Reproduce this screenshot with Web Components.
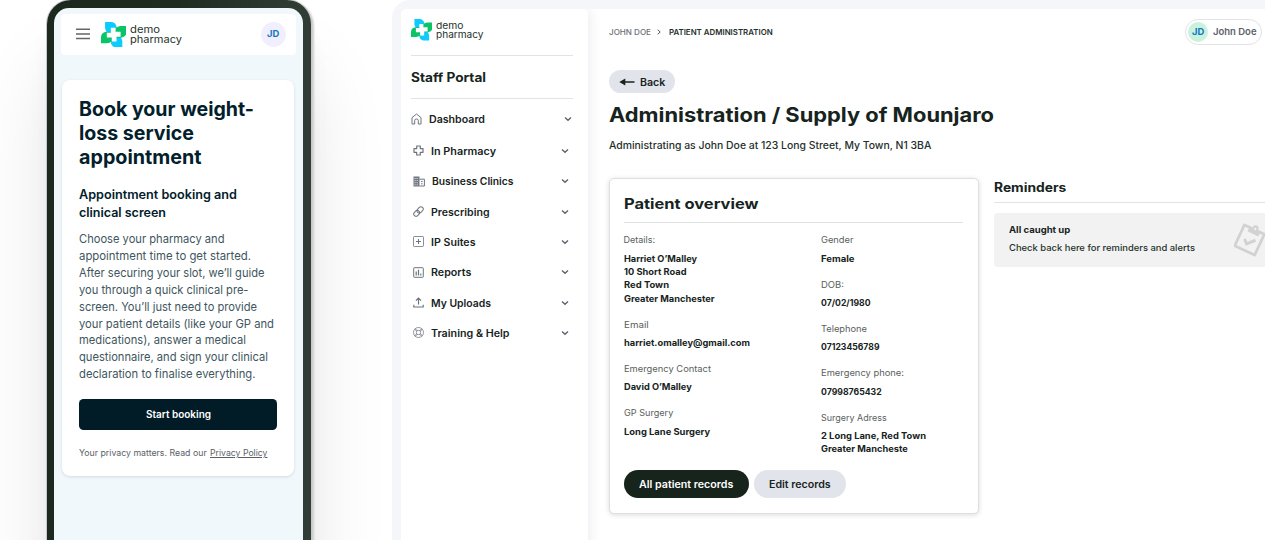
<!DOCTYPE html>
<html lang="en">
<head>
<meta charset="utf-8">
<title>Demo Pharmacy</title>
<style>
html,body{margin:0;height:540px;width:1265px;overflow:hidden;background:#fff;font-family:Inter,"Noto Sans",sans-serif;color:#16241c}
</style>
</head>
<body>
<pharmacy-showcase></pharmacy-showcase>
<script>
function define(name, html) {
  const t = document.createElement('template');
  t.innerHTML = html;
  customElements.define(name, class extends HTMLElement {
    connectedCallback() {
      if (this.shadowRoot) return;
      this.attachShadow({mode: 'open'}).append(t.content.cloneNode(true));
    }
  });
}

define('pharmacy-showcase', `<style>
:host{display:flex;width:1265px;height:540px;overflow:hidden;background:#fff}
</style><phone-stage></phone-stage><tablet-frame></tablet-frame>`);

/* ---------- phone ---------- */
define('phone-stage', `<style>
:host{display:block;box-sizing:border-box;width:392px;height:540px;padding-left:46.5px;flex:none;overflow:hidden;background:#fff}
.body{box-sizing:border-box;width:264px;height:640px;border-radius:24px;padding:8px 8px 0 7.5px;background:linear-gradient(90deg,#1b291f 0%,#1e2c22 50%,#303e35 100%);box-shadow:0 0 0 1px #c9c9c9,2px 2px 2px 1px #cfcdd0,0 70px 80px 0 rgba(0,0,0,.1),0 30px 24px rgba(0,0,0,.035)}
.screen{box-sizing:border-box;height:632px;border-radius:15px 15px 0 0;background:#f0f8fb;padding:5.5px 7px 0 6.5px}
</style><div class="body"><div class="screen"><phone-bar></phone-bar><booking-card></booking-card></div></div>`);

define('phone-bar', `<style>
:host{display:flex;box-sizing:border-box;height:41.5px;align-items:center;background:#fff;border-radius:4px;padding:0 9.5px 0 15.5px}
.menu{display:block;width:14px;height:12px;margin-right:10.5px;flex:none}
brand-logo{--s:25.4px}
.words{margin-left:4.5px;flex:1;padding-top:.4px;color:#25332c}
</style><svg class="menu" viewBox="0 0 14 12"><path d="M0 1.2H14M0 5.9H14M0 10.6H14" stroke="#666" stroke-width="1.5"/></svg><brand-logo></brand-logo>
<div class="words"><fit-line w="30" fs="10.2" lh="10.8">demo</fit-line><fit-line w="52" fs="10.2" lh="10.8">pharmacy</fit-line></div>
<user-badge style="--d:25px;--bg:#f1effe"><fit-line w="12.3" fs="9.2" fw="700" lh="12">JD</fit-line></user-badge>`);

define('brand-logo', `<style>:host{display:block;width:var(--s);height:var(--s);flex:none}svg{display:block;width:100%;height:100%}</style>
<svg viewBox="0 0 25 25"><defs><path id="l" d="M4 0H10.5Q14.9.5 15.4 5.5V12.5H9.5Q4.8 11.3 4 6Z"/></defs>
<use href="#l" fill="#0ccbff"/><use href="#l" fill="#0ccbff" transform="rotate(180 12.5 12.5)"/>
<use href="#l" fill="#0bc46a" transform="rotate(90 12.5 12.5)"/><use href="#l" fill="#0bc46a" transform="rotate(270 12.5 12.5)"/>
<path fill="#fff" d="M9.7 5.7H14.4V9.7H19.3V14.4H15.3V19.3H10.6V15.3H5.7V10.6H9.7Z"/></svg>`);

define('user-badge', `<style>:host{display:flex;align-items:center;justify-content:center;width:var(--d);height:var(--d);border-radius:50%;background:var(--bg);color:#1377c2;flex:none}</style><slot></slot>`);

define('booking-card', `<style>
:host{display:block;box-sizing:border-box;margin:25px 1.5px 0 1.5px;width:231.5px;height:396.3px;padding:17px 16px 0 17px;background:#fff;border-radius:8px;box-shadow:0 1px 3px rgba(20,50,60,.14)}
.h1,.h2{color:#02202b}.h2{margin-top:17px}
.p{margin-top:10.4px;color:#415660}
.btn{display:flex;align-items:center;justify-content:center;width:198px;height:31.7px;margin-top:15.6px;background:#011c26;border-radius:4.5px;color:#fff}
.note{display:flex;gap:3px;margin-top:16.9px;color:#5b6167}
u{text-underline-offset:1px;text-decoration-thickness:1px}
</style>
<div class="h1"><fit-line w="175" fs="19.5" fw="700" lh="24">Book your weight-</fit-line><fit-line w="115" fs="19.5" fw="700" lh="24">loss service</fit-line><fit-line w="122.5" fs="19.5" fw="700" lh="24">appointment</fit-line></div>
<div class="h2"><fit-line w="158" fs="12.5" fw="600" lh="17.5">Appointment booking and</fit-line><fit-line w="87" fs="12.5" fw="600" lh="17.5">clinical screen</fit-line></div>
<div class="p">
<fit-line w="145.5" fs="11.6" lh="16.85">Choose your pharmacy and</fit-line>
<fit-line w="172" fs="11.6" lh="16.85">appointment time to get started.</fit-line>
<fit-line w="185.5" fs="11.6" lh="16.85">After securing your slot, we’ll guide</fit-line>
<fit-line w="169.5" fs="11.6" lh="16.85">you through a quick clinical pre-</fit-line>
<fit-line w="178" fs="11.6" lh="16.85">screen. You’ll just need to provide</fit-line>
<fit-line w="195" fs="11.6" lh="16.85">your patient details (like your GP and</fit-line>
<fit-line w="167" fs="11.6" lh="16.85">medications), answer a medical</fit-line>
<fit-line w="189" fs="11.6" lh="16.85">questionnaire, and sign your clinical</fit-line>
<fit-line w="176.5" fs="11.6" lh="16.85">declaration to finalise everything.</fit-line></div>
<div class="btn"><fit-line w="65" fs="10" fw="600" lh="14">Start booking</fit-line></div>
<div class="note"><fit-line w="127.7" fs="8.6" lh="13">Your privacy matters. Read our</fit-line><fit-line w="57.5" fs="8.6" lh="13"><u>Privacy Policy</u></fit-line></div>`);

/* ---------- tablet ---------- */
define('tablet-frame', `<style>
:host{display:block;flex:1;min-width:0;box-sizing:border-box;height:560px;padding:9px 0 0 8.5px;background:#f5f6f9;border-radius:18px 0 0 0}
.inner{display:flex;height:551px;background:#fff;border-radius:5px 0 0 0;overflow:hidden}
</style><div class="inner"><staff-sidebar></staff-sidebar><patient-page></patient-page></div>`);

define('staff-sidebar', `<style>
:host{display:block;box-sizing:border-box;width:187.5px;padding:10px 15px 0 10px;flex:none;background:#fff;border-radius:5px;box-shadow:0 0 14px rgba(60,66,90,.13);color:#17241d}
.brand{display:flex;gap:3.7px;height:35.5px;align-items:flex-start;border-bottom:1px solid #e0e4e6}
brand-logo{--s:21.5px}.words{padding-top:1.6px;color:#25332c}
.title{display:flex;align-items:center;box-sizing:border-box;height:43px;padding-top:1px;border-bottom:1px solid #e0e4e6}
nav{display:block;padding-top:5px}
</style>
<div class="brand"><brand-logo></brand-logo><div class="words"><fit-line w="27.5" fs="9.3" lh="9.7">demo</fit-line><fit-line w="47.5" fs="9.3" lh="9.7">pharmacy</fit-line></div></div>
<div class="title"><fit-line w="75" fs="12.7" fw="700" lh="17">Staff Portal</fit-line></div>
<nav>
<nav-row style="--l:0px;--g:7px;--r:1.2px;--h:31.6px"><svg slot="icon" width="11" height="12" viewBox="0 0 11 12"><path d="M1 4.6 5.5 1 10 4.6V11H7.3V7.4Q7.3 6 5.5 6T3.7 7.4V11H1Z"/></svg><fit-line w="56" fs="10" fw="600" lh="14">Dashboard</fit-line></nav-row>
<nav-row style="--h:31px"><svg slot="icon" width="11" height="11" viewBox="0 0 11 11"><path d="M3.7 1H7.3V3.7H10V7.3H7.3V10H3.7V7.3H1V3.7H3.7Z" stroke-linejoin="round" stroke-width="1.2"/></svg><fit-line w="65" fs="10" fw="600" lh="14">In Pharmacy</fit-line></nav-row>
<nav-row style="--g:7px"><svg slot="icon" width="12" height="11" viewBox="0 0 12 11"><path d="M.5.5H6.5V10.5H.5Z" fill="#737983" stroke="none"/><path d="M6.5 3.2H11.4V10H6.5" stroke-width="1"/><path d="M1.5 2.5H5.5M1.5 4.6H5.5M1.5 6.7H5.5M1.5 8.8H5.5" stroke="#fff" stroke-width=".7" stroke-dasharray="1.2 .9"/><path d="M8 5.5H9.6M8 7.8H9.6" stroke-width="1"/></svg><fit-line w="81.5" fs="10" fw="600" lh="14">Business Clinics</fit-line></nav-row>
<nav-row><svg slot="icon" width="11" height="11" viewBox="0 0 11 11"><g transform="rotate(-45 5.5 5.5)"><rect x="-.2" y="3.2" width="6.2" height="4.6" rx="2.3"/><rect x="4.4" y="3.2" width="6.8" height="4.6" rx="2.3"/></g></svg><fit-line w="58.5" fs="10" fw="600" lh="14">Prescribing</fit-line></nav-row>
<nav-row><svg slot="icon" width="11" height="11" viewBox="0 0 11 11"><rect x=".5" y=".5" width="10" height="10" rx=".7" stroke-width=".8"/><path d="M5.5 3V8M3 5.5H8"/></svg><fit-line w="44.5" fs="10" fw="600" lh="14">IP Suites</fit-line></nav-row>
<nav-row><svg slot="icon" width="11" height="11" viewBox="0 0 11 11"><rect x=".7" y=".7" width="9.6" height="9.6" rx=".6"/><path d="M3.2 4.5V8.5M5.5 2.7V8.5M7.8 6.5V8.5" stroke-width="1.2"/></svg><fit-line w="40.3" fs="10" fw="600" lh="14">Reports</fit-line></nav-row>
<nav-row><svg slot="icon" width="11" height="11" viewBox="0 0 11 11"><path d="M5.5 7.6V1.2M2.9 3.7 5.5 1.1 8.1 3.7M.8 7.8V10H10.2V7.8" stroke-width="1.15"/></svg><fit-line w="60" fs="10" fw="600" lh="14">My Uploads</fit-line></nav-row>
<nav-row><svg slot="icon" width="11" height="11" viewBox="0 0 11 11"><g stroke-width=".75"><circle cx="5.5" cy="5.5" r="5"/><circle cx="5.5" cy="5.5" r="2.2"/><path d="M1.7 2.4 3.7 4.1M2.4 1.7 4.1 3.7M9.3 2.4 7.3 4.1M8.6 1.7 6.9 3.7M1.7 8.6 3.7 6.9M2.4 9.3 4.1 7.3M9.3 8.6 7.3 6.9M8.6 9.3 6.9 7.3"/></g></svg><fit-line w="78.5" fs="10" fw="600" lh="14">Training &amp; Help</fit-line></nav-row>
</nav>`);

define('nav-row', `<style>
:host{display:flex;align-items:center;box-sizing:border-box;height:var(--h,30.35px);padding:0 var(--r,4px) 0 var(--l,2.5px)}
::slotted(svg){fill:none;stroke:#6d737d;stroke-width:1;margin-right:var(--g,7px);flex:none}
.c{margin-left:auto;flex:none}
</style><slot name="icon"></slot><slot></slot><svg class="c" width="8" height="6" viewBox="0 0 8 6"><path d="M1 1.4 4 4.3 7 1.4" fill="none" stroke="#5c636d" stroke-width="1.35"/></svg>`);

define('patient-page', `<style>
:host{display:block;flex:1;min-width:0;box-sizing:border-box;padding:10px 0 0 20.5px;color:#17241d}
header{display:flex;align-items:center;height:26px;padding-right:3px}
.crumb{color:#6b7178}.here{color:#25302b}
header svg{margin:0 7.5px 0 6.5px}
.user{display:flex;align-items:center;box-sizing:border-box;margin-left:auto;width:77px;height:26px;border:1px solid #e2e3e6;border-radius:13px;padding-left:2px;gap:4.8px;color:#5b6067}
.back{display:flex;align-items:center;box-sizing:border-box;width:66.5px;height:23px;margin-top:25px;border-radius:12px;background:#e2e4ec;padding-left:10px;gap:5px;color:#19231e}
.h1{margin-top:9px}.sub{margin-top:10px;color:#25302b}
.cols{display:flex;gap:15px;margin-top:24.5px}
reminder-list{flex:1;min-width:0}
</style>
<header><fit-line class="crumb" w="42" fs="7.9" fw="500" lh="12">JOHN DOE</fit-line><svg width="4" height="6" viewBox="0 0 4 6"><path d="M.7.7 3.2 3 .7 5.3" fill="none" stroke="#555" stroke-width="1"/></svg><fit-line class="here" w="103.7" fs="7.9" fw="600" lh="12">PATIENT ADMINISTRATION</fit-line>
<div class="user"><user-badge style="--d:20px;--bg:#c8f2de"><fit-line w="12.3" fs="9" fw="700" lh="12">JD</fit-line></user-badge><fit-line w="43.5" fs="9.3" fw="600" lh="12">John Doe</fit-line></div></header>
<div class="back"><svg width="16" height="8" viewBox="0 0 16 8"><path d="M4 4H15.5" stroke="#19231e" stroke-width="1.4"/><path d="M.3 4 6.3.6V7.4Z" fill="#19231e"/></svg><fit-line w="25.3" fs="10" fw="600" lh="14">Back</fit-line></div>
<fit-line class="h1" w="385" fs="19.6" fw="700" lh="26">Administration / Supply of Mounjaro</fit-line>
<fit-line class="sub" w="322.3" fs="9.8" fw="500" lh="15">Administrating as John Doe at 123 Long Street, My Town, N1 3BA</fit-line>
<div class="cols"><patient-overview></patient-overview><reminder-list></reminder-list></div>`);

define('patient-overview', `<style>
:host{display:block;box-sizing:border-box;width:370px;height:336px;padding:15px 14.5px 0 14px;flex:none;background:#fff;border:1px solid #dddfe2;border-radius:5px;box-shadow:0 1px 5px rgba(30,34,50,.16)}
.t{padding-bottom:9.5px;border-bottom:1px solid #dfe1e3}
.grid{display:grid;grid-template-columns:197.5px 1fr;margin-top:10.3px}
.acts{display:flex;gap:5px;margin-top:1.8px}
.acts div{display:flex;align-items:center;justify-content:center;height:28px;border-radius:14px;background:#e2e4ec;width:92.7px}
.acts .dark{background:#17241b;color:#fff;width:125px}
</style>
<div class="t"><fit-line w="134.5" fs="14.4" fw="700" lh="19">Patient overview</fit-line></div>
<div class="grid"><div>
<data-field label="Details:" lw="31.5" lines="Harriet O’Malley|73;10 Short Road|62.5;Red Town|45;Greater Manchester|90.5"></data-field>
<data-field label="Email" lw="24.7" lines="harriet.omalley@gmail.com|126"></data-field>
<data-field label="Emergency Contact" lw="87" lines="David O’Malley|67.7"></data-field>
<data-field label="GP Surgery" lw="49.3" lines="Long Lane Surgery|86.2"></data-field>
</div><div>
<data-field label="Gender" lw="32.5" lines="Female|33.5"></data-field>
<data-field label="DOB:" lw="23" lines="07/02/1980|49.5"></data-field>
<data-field label="Telephone" lw="46" lines="07123456789|58.5"></data-field>
<data-field label="Emergency phone:" lw="83" lines="07998765432|60.7"></data-field>
<data-field label="Surgery Adress" lw="65.7" lines="2 Long Lane, Red Town|105;Greater Mancheste|86.7"></data-field>
</div></div>
<div class="acts"><div class="dark"><fit-line w="94.3" fs="10" fw="600" lh="14">All patient records</fit-line></div><div><fit-line w="61.7" fs="10" fw="600" lh="14">Edit records</fit-line></div></div>`);

define('reminder-list', `<style>
:host{display:block}
.t{padding:1px 0 6.5px;border-bottom:1px solid #e1e3e5}
.box{display:flex;box-sizing:border-box;height:54.5px;margin-top:9.5px;background:#f2f2f2;border-radius:3px 0 0 3px;padding:10.6px 0 0 15px;color:#25302b}
.box svg{margin-left:auto;flex:none}
.b{color:#17241d;margin-bottom:5.2px}
</style>
<div class="t"><fit-line w="72.3" fs="12.5" fw="700" lh="17">Reminders</fit-line></div>
<div class="box"><div><fit-line class="b" w="61.3" fs="9" fw="700" lh="13">All caught up</fit-line><fit-line w="186" fs="9" fw="500" lh="13">Check back here for reminders and alerts</fit-line></div>
<svg width="31" height="34" viewBox="0 0 31 34" fill="none" stroke="#d2d2d2"><g transform="rotate(25 15.5 17)"><path d="M12 5.5H4.5V28.5H26.5V5.5H20" stroke-width="2.8" stroke-linejoin="round"/><path d="M10 10V4.5H12.6Q13.2.8 16 .8T19.4 4.5H22V10Z" fill="#d2d2d2" stroke="none"/><circle cx="16" cy="4.6" r="1.2" fill="#f2f2f2" stroke="none"/><path d="M10.5 18.2 14.5 21.7 21 14.7" stroke-width="3"/></g></svg></div>`);

/* A label above one or more bold values; "lines" holds text|width pairs. */
customElements.define('data-field', class extends HTMLElement {
  connectedCallback() {
    if (this.shadowRoot) return;
    const rows = this.getAttribute('lines').split(';').map(s => s.split('|'));
    this.attachShadow({mode: 'open'}).innerHTML = `<style>
:host{display:block;margin-bottom:12.65px}.l{color:#59615d;margin-bottom:5px}.v{color:#17241d}</style>
<fit-line class="l" w="${this.getAttribute('lw')}" fs="9" lh="13.35">${this.getAttribute('label')}</fit-line>` +
      rows.map(([t, w]) => `<fit-line class="v" w="${w}" fs="9" fw="700" lh="13.35">${t}</fit-line>`).join('');
  }
});

/* One line of text, widened or narrowed to the width in "w". */
customElements.define('fit-line', class extends HTMLElement {
  connectedCallback() {
    if (this.shadowRoot) return;
    const a = n => this.getAttribute(n);
    this.attachShadow({mode: 'open'}).innerHTML = `<style>
:host{display:block;flex:none;width:${a('w')}px;height:${a('lh')}px;white-space:nowrap}
span{display:inline-block;vertical-align:top;font-size:${a('fs')}px;font-weight:${a('fw') || 400};line-height:${a('lh')}px;transform-origin:0 50%}
</style><span><slot></slot></span>`;
    const s = this.shadowRoot.querySelector('span');
    const n = s.getBoundingClientRect().width;
    if (n) s.style.transform = `scaleX(${a('w') / n})`;
  }
});
</script>
</body>
</html>
